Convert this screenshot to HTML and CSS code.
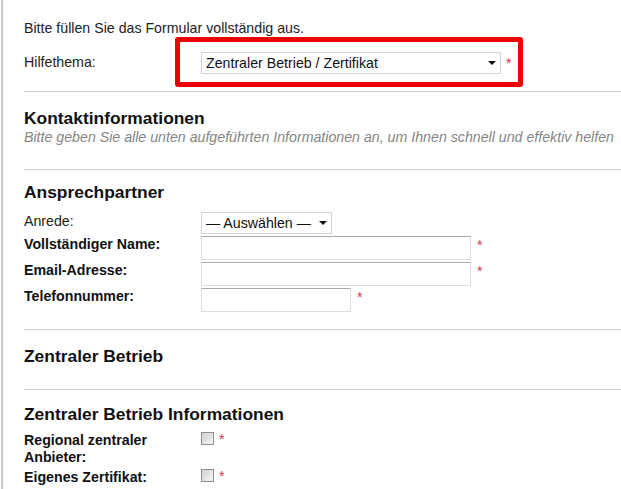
FILE: index.html
```html
<!DOCTYPE html>
<html lang="de">
<head>
  <meta charset="utf-8">
  <meta name="viewport" content="width=device-width,initial-scale=1" />
  <title>Support-Anfrage</title>
  <link rel="stylesheet" href="styles.css">
</head>

<body>
  <div class="page">
    <p class="intro">Bitte füllen Sie das Formular vollständig aus.</p>

    <div class="topic-row">
      <label class="label-topic" for="topic">Hilfethema:</label>
      <div class="highlight">
        <span class="select select-topic">
          <select id="topic">
            <option>Zentraler Betrieb / Zertifikat</option>
          </select>
        </span>
        <span class="req">*</span>
      </div>
    </div>

    <div class="section s-contact">
      <h2>Kontaktinformationen</h2>
      <p class="hint">Bitte geben Sie alle unten aufgeführten Informationen an, um Ihnen schnell und effektiv helfen</p>
    </div>

    <div class="section s-person">
      <h2>Ansprechpartner</h2>
      <div class="row row-select">
        <label class="label plain">Anrede:</label>
        <span class="select select-small">
          <select>
            <option>— Auswählen —</option>
            <option>Herr</option>
            <option>Frau</option>
          </select>
        </span>
      </div>
      <div class="row">
        <label class="label">Vollständiger Name:</label>
        <input class="text wide" type="text">
        <span class="req">*</span>
      </div>
      <div class="row">
        <label class="label">Email-Adresse:</label>
        <input class="text wide" type="text">
        <span class="req">*</span>
      </div>
      <div class="row">
        <label class="label">Telefonnummer:</label>
        <input class="text short" type="text">
        <span class="req">*</span>
      </div>
    </div>

    <div class="section s-central">
      <h2>Zentraler Betrieb</h2>
    </div>

    <div class="section s-info">
      <h2>Zentraler Betrieb Informationen</h2>
      <div class="row row-check">
        <label class="label">Regional zentraler Anbieter:</label>
        <input class="check" type="checkbox">
        <span class="req">*</span>
      </div>
      <div class="row row-check">
        <label class="label">Eigenes Zertifikat:</label>
        <input class="check" type="checkbox">
        <span class="req">*</span>
      </div>
    </div>
  </div>
</body>
</html>
```

FILE: styles.css
```css
html, body {
  margin: 0;
  padding: 0;
  background: #fff;
}

body {
  font-family: "Liberation Sans", Arial, sans-serif;
  font-size: 14.2px;
  color: #222;
  overflow: hidden;
}

.page {
  margin-left: 1px;
  border-left: 2px solid #c6c6c6;
  padding: 20px 0 0 21px;
  min-height: 489px;
  box-sizing: border-box;
  overflow: hidden;
}

.intro {
  margin: 0;
  line-height: 16px;
}

/* topic row with the red highlight round the select */
.topic-row {
  display: flex;
  align-items: center;
  margin-top: 1px;
  margin-bottom: 4px;
}

.label-topic {
  width: 151px;
  line-height: 16px;
}

.highlight {
  display: flex;
  align-items: flex-start;
  width: 348px;
  height: 50px;
  border: 5px solid #ee0000;
  border-radius: 3px;
  padding: 10px 0 0 21px;
  box-sizing: border-box;
}

.highlight .req {
  margin-top: 3px;
  margin-left: 5px;
}

.section {
  border-top: 1px solid #cfcfcf;
  padding-bottom: 24px;
}

.section h2 {
  margin: 0;
  font-size: 17.4px;
  line-height: 18px;
  font-weight: bold;
  color: #111;
}

.s-contact { padding-top: 17px; padding-bottom: 23px; }
.s-person { padding-top: 13px; padding-bottom: 17px; }
.s-central { padding-top: 17px; }
.s-info { padding-top: 15px; padding-bottom: 0; }

.s-person h2,
.s-info h2 {
  margin-bottom: 9px;
}

.hint {
  margin: 2px 0 0 0;
  font-style: italic;
  color: #858585;
  line-height: 17px;
  white-space: nowrap;
}

/* form rows */
.row {
  display: flex;
  align-items: flex-start;
  height: 26px;
}

.row-select {
  height: 24px;
}

.label {
  width: 177px;
  flex: none;
  line-height: 16px;
  margin-top: 2px;
  font-weight: bold;
  color: #111;
}

.label.plain {
  font-weight: normal;
  color: #222;
  margin-top: 3px;
}

.req {
  color: #cf3457;
  line-height: 16px;
  margin-left: 6px;
  margin-top: 3px;
}

.text {
  margin: 2px 0 0 0;
  height: 24px;
  box-sizing: border-box;
  border: 1px solid #dcdcdc;
  border-top-color: #a9a9a9;
  padding: 2px 4px;
  font: inherit;
}

.wide { width: 270px; }
.short { width: 150px; }

/* selects */
.select {
  position: relative;
  display: inline-block;
  height: 22px;
}

.select select {
  -webkit-appearance: none;
  appearance: none;
  height: 22px;
  width: 100%;
  margin: 0;
  border: 1px solid #d4d4d4;
  border-radius: 0;
  background: #fff;
  color: #111;
  font: inherit;
  padding: 0 0 0 4px;
}

.select::after {
  content: "";
  position: absolute;
  right: 5px;
  top: 9px;
  border-left: 4px solid transparent;
  border-right: 4px solid transparent;
  border-top: 4px solid #111;
}

.select-topic { width: 300px; }

.select-small {
  width: 131px;
  margin-top: 2px;
}

/* checkboxes */
.row-check {
  height: auto;
  margin-bottom: 3px;
}

.row-check .label {
  line-height: 17px;
  margin-top: 0;
}

.check {
  -webkit-appearance: none;
  appearance: none;
  width: 13px;
  height: 13px;
  margin: 0;
  border: 1px solid #8e8e8e;
  background: linear-gradient(135deg, #d2d2d2, #f4f4f4);
  box-sizing: border-box;
}

.row-check .req {
  margin-left: 5px;
  margin-top: -1px;
}
```
